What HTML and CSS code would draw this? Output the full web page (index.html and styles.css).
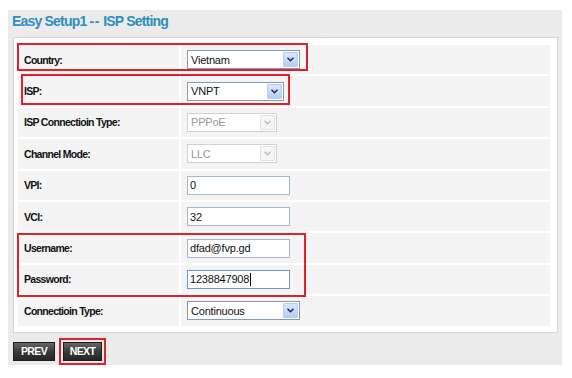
FILE: index.html
```html
<!DOCTYPE html>
<html>
<head>
<meta charset="utf-8">
<link rel="stylesheet" href="styles.css">
</head>
<body>
<div class="page">
  <h1 class="title">Easy Setup1 <span class="dash">--</span> ISP Setting</h1>
  <div class="panel">
    <div class="rows">
      <div class="row"><div class="label">Country:</div><div class="value">
        <div class="select w113"><span class="sel-text">Vietnam</span><span class="sel-btn"><svg width="7" height="5" viewBox="0 0 7 5"><path d="M0.5 0.8 L3.5 3.8 L6.5 0.8" fill="none" stroke="#1d2b4a" stroke-width="1.5"/></svg></span></div>
      </div></div>
      <div class="row"><div class="label">ISP:</div><div class="value">
        <div class="select w97"><span class="sel-text">VNPT</span><span class="sel-btn"><svg width="7" height="5" viewBox="0 0 7 5"><path d="M0.5 0.8 L3.5 3.8 L6.5 0.8" fill="none" stroke="#1d2b4a" stroke-width="1.5"/></svg></span></div>
      </div></div>
      <div class="row"><div class="label">ISP Connectioin Type:</div><div class="value">
        <div class="select w90 disabled"><span class="sel-text">PPPoE</span><span class="sel-btn"><svg width="7" height="5" viewBox="0 0 7 5"><path d="M0.5 0.8 L3.5 3.8 L6.5 0.8" fill="none" stroke="#b8b8b8" stroke-width="1.3"/></svg></span></div>
      </div></div>
      <div class="row"><div class="label">Channel Mode:</div><div class="value">
        <div class="select w90 disabled"><span class="sel-text">LLC</span><span class="sel-btn"><svg width="7" height="5" viewBox="0 0 7 5"><path d="M0.5 0.8 L3.5 3.8 L6.5 0.8" fill="none" stroke="#b8b8b8" stroke-width="1.3"/></svg></span></div>
      </div></div>
      <div class="row"><div class="label">VPI:</div><div class="value"><div class="input">0</div></div></div>
      <div class="row"><div class="label">VCI:</div><div class="value"><div class="input">32</div></div></div>
      <div class="row"><div class="label">Username:</div><div class="value"><div class="input">dfad@fvp.gd</div></div></div>
      <div class="row"><div class="label">Password:</div><div class="value"><div class="input focus">1238847908<span class="caret"></span></div></div></div>
      <div class="row"><div class="label">Connectioin Type:</div><div class="value">
        <div class="select w113"><span class="sel-text">Continuous</span><span class="sel-btn"><svg width="7" height="5" viewBox="0 0 7 5"><path d="M0.5 0.8 L3.5 3.8 L6.5 0.8" fill="none" stroke="#1d2b4a" stroke-width="1.5"/></svg></span></div>
      </div></div>
    </div>
    <div class="mark mark-country"></div>
    <div class="mark mark-isp"></div>
    <div class="mark mark-cred"></div>
  </div>
  <div class="buttons">
    <div class="btn">PREV</div>
    <div class="btn-wrap"><div class="btn">NEXT</div><div class="mark mark-next"></div></div>
  </div>
</div>
</body>
</html>
```

FILE: styles.css
```css
html, body {
  margin: 0;
  padding: 0;
  background: #ffffff;
  font-family: "Liberation Sans", Arial, sans-serif;
}

.page {
  margin: 10px 0 0 8px;
  width: 554px;
  height: 355px;
  background: #ebebeb;
  box-sizing: border-box;
}

.title {
  margin: 0;
  height: 27px;
  padding: 3px 0 0 4px;
  box-sizing: border-box;
  font-size: 14px;
  letter-spacing: -0.8px;
  font-weight: bold;
  color: #2d8fc0;
}

.dash {
  letter-spacing: 0.6px;
}

.panel {
  position: relative;
  margin: 0 4px 0 5px;
  background: #ffffff;
  border: 1px solid #d6d6d6;
  padding: 7px 7px 6px 4px;
}

.rows {
  display: flex;
  flex-direction: column;
  gap: 2px;
}

.row {
  display: grid;
  grid-template-columns: 161px 1fr;
  column-gap: 2px;
  height: 29.4px;
}

.label, .value {
  background: #f4f4f4;
  display: flex;
  align-items: center;
}

.label {
  padding-left: 6px;
  font-size: 10.5px;
  letter-spacing: -0.7px;
  font-weight: bold;
  color: #111111;
}

.value {
  padding-left: 6px;
}

.select {
  height: 19px;
  box-sizing: border-box;
  border: 1px solid #7f9db9;
  background: #ffffff;
  display: flex;
  align-items: stretch;
}

.w113 { width: 113px; }
.w97 { width: 97px; }
.w90 { width: 90px; }

.sel-text {
  flex: 1;
  display: flex;
  align-items: center;
  padding-left: 3px;
  font-size: 11px;
  letter-spacing: -0.2px;
  color: #111111;
}

.sel-btn {
  width: 15px;
  margin: 1px;
  box-sizing: border-box;
  border: 1px solid #b9cbee;
  border-radius: 1px;
  background: linear-gradient(#dbe6fb, #b9cdf4);
  display: flex;
  align-items: center;
  justify-content: center;
}

.select.disabled {
  border-color: #c9d3dc;
}

.select.disabled .sel-text {
  color: #9a9a9a;
}

.select.disabled .sel-btn {
  border-color: #e2e2e2;
  background: #f6f6f6;
}

.input {
  width: 103px;
  height: 19px;
  box-sizing: border-box;
  border: 1px solid #a5b7cc;
  background: #ffffff;
  font-size: 11px;
  letter-spacing: -0.2px;
  color: #111111;
  padding-left: 2px;
  display: flex;
  align-items: center;
}

.input.focus {
  border-color: #6d97d0;
}

.caret {
  width: 1px;
  height: 13px;
  background: #000000;
  margin-left: 1px;
}

.mark {
  position: absolute;
  border: 2px solid #e0202a;
  box-sizing: border-box;
  pointer-events: none;
}

.mark-country {
  left: 3px;
  top: 5px;
  width: 291px;
  height: 28px;
}

.mark-isp {
  left: 7px;
  top: 36px;
  width: 269px;
  height: 31px;
}

.mark-cred {
  left: 3px;
  top: 195px;
  width: 289px;
  height: 64px;
}

.buttons {
  display: flex;
  gap: 8px;
  padding: 9px 0 0 5px;
}

.btn-wrap {
  position: relative;
}

.btn {
  height: 19px;
  box-sizing: border-box;
  border: 1px solid #1c1c1c;
  background: linear-gradient(#666666, #3a3a3a 50%, #262626);
  color: #ffffff;
  font-size: 10.5px;
  letter-spacing: -0.6px;
  font-weight: bold;
  display: flex;
  align-items: center;
  justify-content: center;
  width: 42px;
}

.btn-wrap .btn {
  width: 39px;
}

.mark-next {
  left: -4px;
  top: -4px;
  right: -4px;
  bottom: -4px;
}
```
